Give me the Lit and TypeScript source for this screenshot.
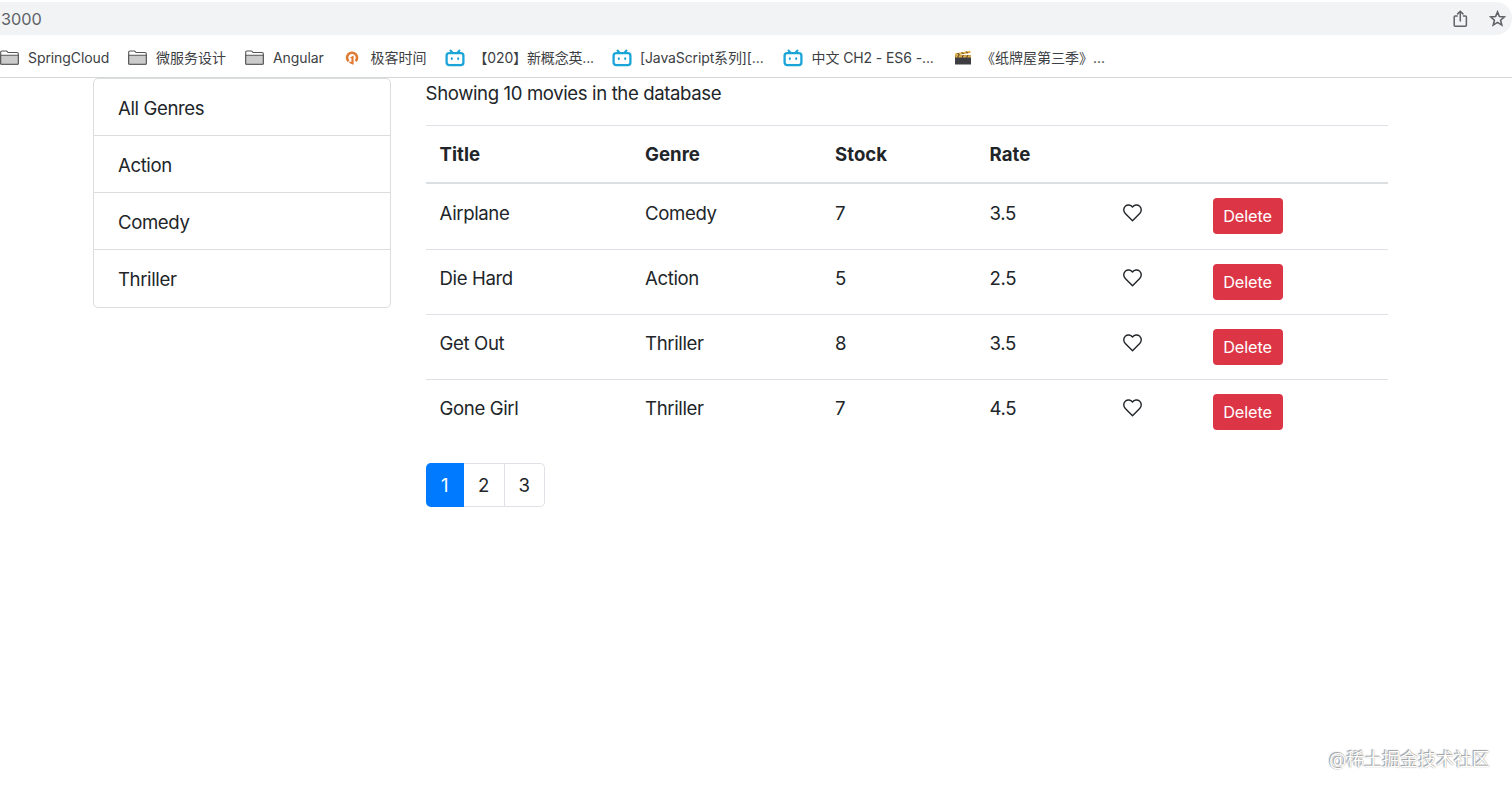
import { LitElement, html, css, svg } from "lit";
import { customElement } from "lit/decorators.js";
import { styleMap } from "lit/directives/style-map.js";

type IconName = "folder" | "geek" | "tv" | "clapper";

const icons = {
  folder: svg`<path d="M.7 4V2.2Q.7 1 1.9 1h4.3q.7 0 1.1.6l.7.9h9q1.3 0 1.3 1.3v9.4q0 1.1-1.1 1.1H1.8Q.7 14.300.7 13.200Z" fill="#fff" stroke="#555" stroke-width="1.1"/><path d="M.7 5.200h17.600v8q0 1.100-1.100 1.100H1.800Q.7 14.300.7 13.200Z" fill="#cbcbcb" stroke="#555" stroke-width="1.1"/>`,
  geek: svg`<path d="M3.600 11.300A5 5 0 1 1 10.600 11.200" fill="none" stroke="#e07a30" stroke-width="2.600"/><path d="M5 7.400 8.600 5.600v8.200q0 1-1 .8L4.400 13v-1.500l2 .4V8.300Z" fill="#e07a30"/>`,
  tv: svg`<path d="M5.500 1.500 7.600 3.700M14.500 1.500l-2.100 2.200" stroke="#1ba4d8" stroke-width="2" stroke-linecap="round"/><rect x="1.600" y="4.100" width="16.800" height="12" rx="2.600" fill="#fff" stroke="#1ba4d8" stroke-width="2.300"/><path d="M6.800 9.200v.8M13.200 9.200v.8" stroke="#1ba4d8" stroke-width="2" stroke-linecap="round"/>`,
  clapper: svg`<path d="M1 5.200h16v9.300H1Z" fill="#3d3d42"/><path d="M1.200 5.200h15.800v2.300H1.200Z" fill="#e0b04a"/><path d="M.8 3.600 16.200.8l.5 2.200L1.300 5.600Z" fill="#e0b04a"/><path d="m3 3.200 2 1.700 1-.2-2-1.700ZM7.200 2.400l2 1.700 1-.2-2-1.700ZM11.400 1.700l2 1.600 1-.2-2-1.600ZM3 7.500l1.400-2.300h1L4 7.500Zm4.500 0 1.400-2.300h1L8.500 7.500Zm4.500 0 1.400-2.300h1L13 7.500Z" fill="#40361f"/>`,
};

const boxes: Record<IconName, [number, number]> = {
  folder: [19, 15],
  geek: [14, 16],
  tv: [20, 18],
  clapper: [18, 15],
};

const bookmarks: { icon: IconName; label: string; width: number; gap: number; spacing: number }[] = [
  { icon: "folder", label: "SpringCloud", width: 128, gap: 9, spacing: -0.08 },
  { icon: "folder", label: "微服务设计", width: 117, gap: 9, spacing: 0 },
  { icon: "folder", label: "Angular", width: 100, gap: 9, spacing: -0.1 },
  { icon: "geek", label: "极客时间", width: 99.5, gap: 11.5, spacing: 0 },
  { icon: "tv", label: "【020】新概念英...", width: 167.5, gap: 9, spacing: -0.15 },
  { icon: "tv", label: "[JavaScript系列][...", width: 170.5, gap: 8, spacing: -0.12 },
  { icon: "tv", label: "中文 CH2 - ES6 -...", width: 171.5, gap: 9, spacing: -0.1 },
  { icon: "clapper", label: "《纸牌屋第三季》...", width: 170, gap: 9, spacing: 0 },
];

const genres = ["All Genres", "Action", "Comedy", "Thriller"];

const movies = [
  { title: "Airplane", genre: "Comedy", stock: 7, rate: 3.5 },
  { title: "Die Hard", genre: "Action", stock: 5, rate: 2.5 },
  { title: "Get Out", genre: "Thriller", stock: 8, rate: 3.5 },
  { title: "Gone Girl", genre: "Thriller", stock: 7, rate: 4.5 },
];

@customElement("app-root")
export class AppRoot extends LitElement {
  static styles = css`
    :host {
      display: flex;
      flex-direction: column;
      position: relative;
      box-sizing: border-box;
      height: 792px;
      overflow: hidden;
      background: #fff;
      color: #212529;
      font: 18.6px/28px Inter, "Noto Sans CJK SC", sans-serif;
    }
    * { box-sizing: border-box; }
    svg { display: block; flex: none; }
    .address {
      display: flex;
      align-items: center;
      height: 33px;
      margin-top: 2px;
      padding: 0 6px 0 1px;
      border-radius: 0 16px 16px 0;
      background: #f1f3f4;
      color: #5f6368;
      font-size: 16.300px;
    }
    .port { flex: 1; }
    .star { margin-left: 21px; }
    .bookmarks {
      display: flex;
      height: 43px;
      padding-bottom: 1px;
      border-bottom: 1px solid #d5d8da;
      color: #3c4043;
      font-size: 14px;
    }
    .bookmark {
      display: flex;
      flex: none;
      align-items: center;
      padding-top: 4px;
      white-space: nowrap;
    }
    .page { display: flex; padding-left: 93px; letter-spacing: -0.39px; }
    .genres {
      width: 298px;
      height: 230px;
      display: grid;
      grid-template-rows: 57px 57px 57px 57px;
      border: 1px solid #dcdddd;
      border-radius: 5px;
      margin-right: 34.600px;
    }
    .genre { padding: 15px 24px; border-bottom: 1px solid #dcdddd; }
    .genre:last-child { border: 0; }
    .content { width: 962px; }
    .summary { height: 47px; padding-top: 1px; }
    .row {
      display: grid;
      grid-template-columns: 205.500px 190px 154.500px 132.500px 90.500px 1fr;
      border-top: 1px solid #dee2e6;
      height: 65px;
    }
    .row > div { padding: 15px 14px 0; }
    .head { height: 59px; border-bottom: 2px solid #dcdfe1; font-weight: 700; letter-spacing: 0; }
    .row.head > div { padding-top: 14px; }
    .first { border-top: 0; }
    .row:not(.first):not(.head) > div { padding-top: 14px; }
    .row > .heart { padding: 20px 14.500px 0; }
    .row:not(.first):not(.head) > .heart { padding-top: 19px; }
    .row.first > .action { padding-top: 14px; }
    .delete {
      display: block;
      width: 70px;
      height: 36px;
      padding: 0;
      border: 0;
      border-radius: 4px;
      background: #dc3545;
      color: #fff;
      font: 16.300px/36px Inter, sans-serif;
      letter-spacing: -0.1px;
    }
    .pages {
      display: flex;
      width: 119px;
      height: 44px;
      margin-top: 19px;
      border: 1px solid #dee2e6;
      border-left: 0;
      border-radius: 5px;
    }
    .number { width: 40px; line-height: 43px; text-align: center; border-left: 1px solid #dee2e6; }
    .number.active {
      width: 38px;
      height: 44px;
      margin-top: -1px;
      border: 0;
      border-radius: 5px 0 0 5px;
      background: #007bff;
      color: #fff;
      line-height: 45px;
    }
    .active + .number { border: 0; }
    .watermark {
      position: absolute;
      right: 22px;
      bottom: 18px;
      color: #fff;
      font-size: 18px;
      letter-spacing: -0.05px;
      text-shadow: -1px -1px 1px #999, 0 0 1px #777;
    }
  `;

  render() {
    return html`
      <div class="address">
        <span class="port">3000</span>
        <svg width="15" height="18" viewBox="0 0 15 18" fill="none" stroke="#5f6368" stroke-width="1.500"><path d="M4.700 6H2.200Q1.200 6 1.200 7v8.200q0 1 1 1h10.200q1 0 1-1V7q0-1-1-1H9.900M7.300 11.500V1.500M4.200 4.400l3.100-3.100 3.100 3.100"/></svg>
        <svg class="star" width="17" height="17" viewBox="0 0 17 17" fill="none" stroke="#5f6368" stroke-width="1.600"><path d="m8.500 1.900 1.900 4.600 5 .4-3.800 3.300 1.200 4.900-4.300-2.700-4.300 2.700 1.200-4.900L1.600 6.900l5-.4Z"/></svg>
      </div>
      <div class="bookmarks">
        ${bookmarks.map((b) => {
          const [w, h] = boxes[b.icon];
          return html`<div class="bookmark" style=${styleMap({ width: `${b.width}px`, gap: `${b.gap}px`, letterSpacing: `${b.spacing}px` })}>
            <svg width=${w} height=${h} viewBox="0 0 ${w} ${h}">${icons[b.icon]}</svg><span>${b.label}</span>
          </div>`;
        })}
      </div>
      <main class="page">
        <nav class="genres">${genres.map((g) => html`<div class="genre">${g}</div>`)}</nav>
        <section class="content">
          <div class="summary">Showing 10 movies in the database</div>
          <div class="row head"><div>Title</div><div>Genre</div><div>Stock</div><div>Rate</div></div>
          ${movies.map((m, i) => html`<div class="row ${i ? "" : "first"}">
            <div>${m.title}</div><div>${m.genre}</div><div>${m.stock}</div><div>${m.rate}</div>
            <div class="heart"><svg width="19" height="18" viewBox="0 0 19 18" fill="none" stroke="#212529" stroke-width="1.400" stroke-linejoin="round"><path d="M9.500 3C7.700.7 4.600.3 2.500 2 .2 4 .2 7.200 2.300 9.400l7.200 7.300 7.200-7.300c2.100-2.200 2.100-5.400-.2-7.400-2.100-1.700-5.200-1.300-7 1Z"/></svg></div>
            <div class="action"><button class="delete">Delete</button></div>
          </div>`)}
          <div class="pages"><div class="number active">1</div><div class="number">2</div><div class="number">3</div></div>
        </section>
      </main>
      <div class="watermark">@稀土掘金技术社区</div>
    `;
  }
}
